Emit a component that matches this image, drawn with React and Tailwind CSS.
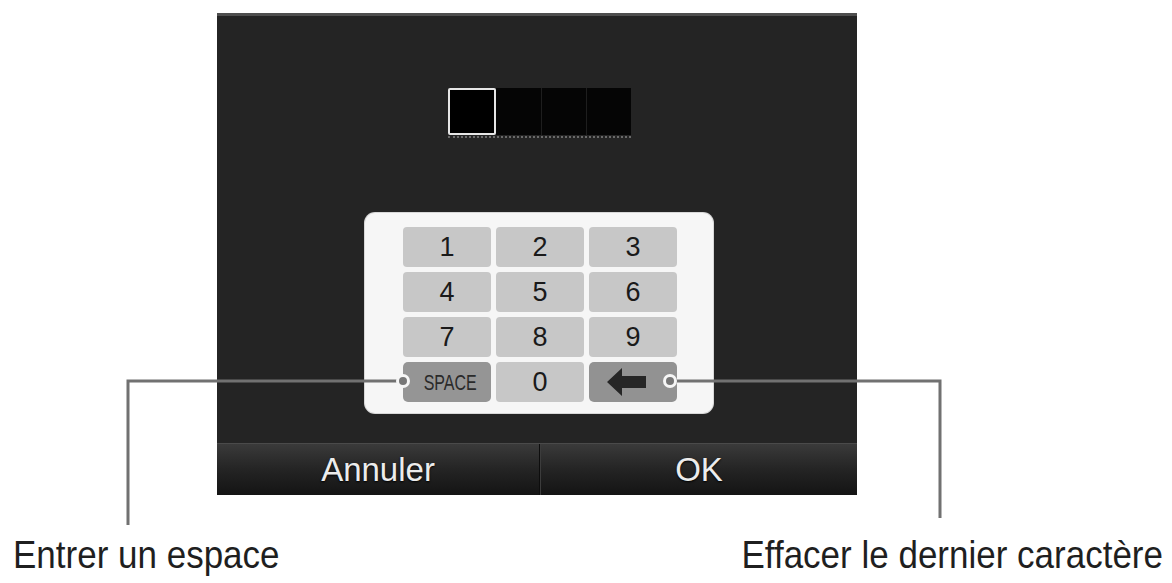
import React from 'react';

const keys = ['1', '2', '3', '4', '5', '6', '7', '8', '9'];

function BackArrow() {
  return (
    <svg width="40" height="28" viewBox="0 0 40 28">
      <polygon points="0,14 15,0 15,8 39,8 39,20 15,20 15,28" fill="#262626" />
    </svg>
  );
}

function Keypad() {
  return (
    <div className="w-[348px] rounded-[10px] bg-[#f6f6f6] pl-[38px] pr-[36px] pt-[14px] pb-[11px] shadow-[0_0_0_1px_#d8d8d8]">
      <div className="grid grid-cols-[88px_88px_88px] grid-rows-[40px_40px_40px_40px] gap-[5px]">
        {keys.map((k) => (
          <div
            key={k}
            className="flex items-center justify-center rounded-[4px] bg-[#c7c7c7] text-[27px] leading-none text-[#1a1a1a]"
          >
            {k}
          </div>
        ))}
        <div className="flex items-center justify-center rounded-[5px] bg-[#959595] pl-[6px]">
          <span className="scale-x-[0.8] scale-y-110 text-[20px] leading-none text-[#2a2a2a]">SPACE</span>
        </div>
        <div className="flex items-center justify-center rounded-[4px] bg-[#c7c7c7] text-[27px] leading-none text-[#1a1a1a]">
          0
        </div>
        <div className="flex items-center justify-center rounded-[5px] bg-[#929292] pr-[12px]">
          <BackArrow />
        </div>
      </div>
    </div>
  );
}

function Screen() {
  return (
    <div className="ml-[217px] mt-[13px] flex h-[482px] w-[640px] flex-col border-t-[3px] border-[#4e4e4e] bg-[#242424]">
      <div className="flex flex-1 flex-col items-center pl-[4px] pt-[72px]">
        <div className="flex flex-col">
          <div className="flex">
            <div className="h-[47px] w-[48px] rounded-[2px] border-2 border-[#e6e6e6] bg-black" />
            <div className="h-[47px] w-[45px] bg-[#050505]" />
            <div className="h-[47px] w-[45px] border-l border-[#1e1e1e] bg-[#050505]" />
            <div className="h-[47px] w-[45px] border-l border-[#1e1e1e] bg-[#050505]" />
          </div>
          <div className="mt-[1px] h-0 border-b-2 border-dotted border-[#6a6a6a]" />
        </div>
        <div className="mt-[75px]">
          <Keypad />
        </div>
      </div>
      <div className="grid h-[52px] grid-cols-[323px_317px] border-t border-[#4a4a4a] bg-gradient-to-b from-[#3a3a3a] via-[#242424] to-[#141414]">
        <div className="flex items-center justify-center border-r border-[#0d0d0d] text-[33px] leading-none text-[#ececec] [text-shadow:0_1px_2px_#000]">
          Annuler
        </div>
        <div className="flex items-center justify-center border-l border-[#3c3c3c] text-[33px] leading-none text-[#ececec] [text-shadow:0_1px_2px_#000]">
          OK
        </div>
      </div>
    </div>
  );
}

function Callouts() {
  return (
    <svg className="pointer-events-none absolute left-0 top-0" width="1172" height="583">
      <polyline points="403,381 128,381 128,525" fill="none" stroke="#717171" strokeWidth="3" />
      <polyline points="670,381 940,381 940,518" fill="none" stroke="#717171" strokeWidth="3" />
      <circle cx="403" cy="381" r="7" fill="#f6f6f6" />
      <circle cx="403" cy="381" r="4" fill="#777" />
      <circle cx="670" cy="381" r="7" fill="#f6f6f6" />
      <circle cx="670" cy="381" r="4" fill="#777" />
    </svg>
  );
}

export default function App() {
  return (
    <div className="relative h-[583px] w-[1172px] overflow-hidden bg-white font-['Liberation_Sans',Arial,sans-serif]">
      <Screen />
      <div className="mt-[42px] flex justify-between pl-[13px] pr-[9px] text-[35px] leading-none text-[#1f1f1f]">
        <span className="scale-y-110">Entrer un espace</span>
        <span className="scale-y-110">Effacer le dernier caractère</span>
      </div>
      <Callouts />
    </div>
  );
}
